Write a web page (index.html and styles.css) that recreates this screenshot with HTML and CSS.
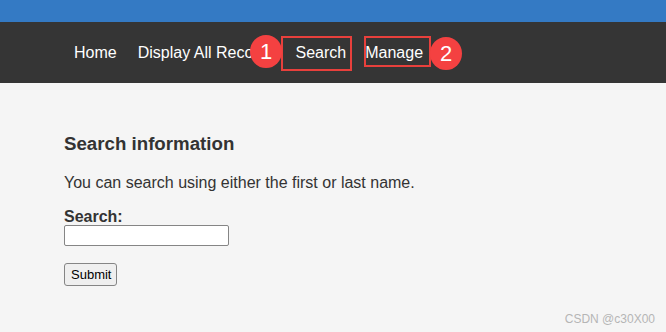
FILE: index.html
```html
<!DOCTYPE html>
<html lang="en">
<head>
    <meta charset="UTF-8">
    <title>Search</title>
    <link rel="stylesheet" href="styles.css">
</head>
<body>
    <div class="topbar"></div>
    <nav class="navbar">
        <a href="#">Home</a>
        <a href="#">Display All Records</a>
        <a href="#">Search</a>
        <a href="#">Manage</a>

        <!-- annotations -->
        <span class="mark mark-search"></span>
        <span class="mark mark-manage"></span>
        <span class="badge badge-1">1</span>
        <span class="badge badge-2">2</span>
    </nav>

    <div class="content">
        <h2>Search information</h2>
        <p>You can search using either the first or last name.</p>
        <form>
            <label for="search">Search:</label>
            <input type="text" id="search">
            <button type="submit">Submit</button>
        </form>
    </div>

    <div class="watermark">CSDN @c30X00</div>
</body>
</html>
```
FILE: styles.css
```css
body {
    margin: 0;
    font-family: Arial, "Liberation Sans", sans-serif;
    background-color: #f5f5f5;
    color: #333;
    height: 332px;
    overflow: hidden;
    position: relative;
}
.topbar {
    height: 22px;
    background-color: #347ac4;
}
.navbar {
    position: relative;
    height: 61px;
    background-color: #353535;
    display: flex;
    align-items: center;
    gap: 21px;
    padding-left: 74px;
}
.navbar a {
    color: #fff;
    text-decoration: none;
    font-size: 16px;
}
.navbar a:nth-child(3) {
    margin-left: -1px;
}
.navbar a:nth-child(4) {
    margin-left: -2px;
}
.mark {
    position: absolute;
    border: 2px solid #e8403c;
    box-sizing: border-box;
}
.mark-search {
    left: 281px;
    top: 14px;
    width: 71px;
    height: 35px;
}
.mark-manage {
    left: 364px;
    top: 14px;
    width: 67px;
    height: 31px;
}
.badge {
    position: absolute;
    width: 32px;
    height: 33px;
    border-radius: 50%;
    background-color: #f44141;
    color: #fff;
    font-size: 22px;
    display: flex;
    align-items: center;
    justify-content: center;
}
.badge-1 {
    left: 250px;
    top: 13px;
}
.badge-2 {
    left: 430px;
    top: 15px;
}
.content {
    padding-left: 64px;
    padding-top: 50px;
}
h2 {
    font-size: 18.7px;
    margin: 0 0 19px 0;
}
p {
    font-size: 16px;
    margin: 0 0 16px 0;
}
label {
    display: block;
    font-weight: bold;
    font-size: 16px;
    line-height: 17px;
}
input {
    display: block;
    width: 165px;
    height: 21px;
    box-sizing: border-box;
    border: 1px solid #858585;
    border-radius: 2px;
    background: #fff;
    margin: 0 0 17px 0;
}
button {
    font-family: Arial, "Liberation Sans", sans-serif;
    font-size: 13px;
    color: #000;
    background-color: #efefef;
    border: 1px solid #858585;
    border-radius: 3px;
    padding: 3px 5px 3px 6px;
}
.watermark {
    position: absolute;
    right: 11px;
    bottom: 6px;
    font-size: 12px;
    color: #b5b5b5;
}
```
